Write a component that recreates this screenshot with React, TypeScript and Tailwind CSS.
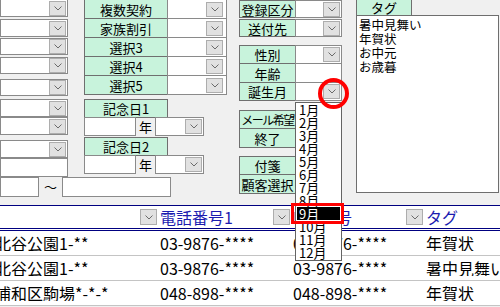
const Chev = () => (
  <svg width="8" height="5" viewBox="0 0 8 5" fill="none">
    <path d="M0.5 0.5 L4 4 L7.5 0.5" stroke="#6a6a6a" strokeWidth="1" />
  </svg>
)

const DropBtn = ({ className = "" }: { className?: string }) => (
  <div className={`w-[17px] h-[15px] shrink-0 bg-[#e1e1e1] border border-[#adadad] flex items-center justify-center ${className}`}>
    <Chev />
  </div>
)

function Box({ className = "", button = false, pad = "pr-px" }: { className?: string; button?: boolean; pad?: string }) {
  return (
    <div className={`bg-white border border-[#8a8a8a] flex items-center justify-end ${pad} ${className}`}>
      {button && <DropBtn />}
    </div>
  )
}

function Label({ children, className = "" }: { children: React.ReactNode; className?: string }) {
  return (
    <div className={`bg-[#c8f3dc] border border-[#6f6f6f] flex items-center justify-center text-[13px] leading-none text-black whitespace-nowrap overflow-hidden shrink-0 ${className}`}>
      {children}
    </div>
  )
}

const months = ["1月", "2月", "3月", "4月", "5月", "6月", "7月", "8月", "9月", "10月", "11月", "12月"]
const tags = ["暑中見舞い", "年賀状", "お中元", "お歳暮"]

const rows = [
  { addr: "北谷公園1-**", tel1: "03-9876-****", tel2: "03-9876-****", tag: "年賀状" },
  { addr: "北谷公園1-**", tel1: "03-9876-****", tel2: "03-9876-****", tag: "暑中見舞い" },
  { addr: "浦和区駒場*-*-*", tel1: "048-898-****", tel2: "048-898-****", tag: "年賀状" },
]

export default function App() {
  return (
    <div className="relative w-[500px] h-[307px] overflow-hidden bg-[#f0f0f0] text-black font-['Noto_Sans_CJK_JP','Noto_Sans',sans-serif]">
      {/* Form area */}
      <div className="flex h-[205px]">
        {/* Left block */}
        <div className="w-[227px] flex flex-col shrink-0">
          <div className="flex h-[177px]">
            <div className="w-[68px] flex flex-col">
              <Box button className="h-[18px] -mt-px" />
              <Box button className="h-[18px] mt-[2px]" />
              <Box button className="h-[17px] mt-px" />
              <Box button className="h-[17px] mt-[2px]" />
              <Box button className="h-[17px] mt-[5px]" />
              <Box button className="h-[18px] mt-[3px]" />
              <Box button className="h-[18px]" />
              <Box button className="h-[18px] mt-[5px]" />
              <Box className="h-[19px]" />
            </div>
            <div className="w-[16px]" />
            <div className="w-[143px] flex flex-col">
              {["複数契約", "家族割引", "選択3", "選択4", "選択5"].map((t) => (
                <div key={t} className="flex h-[20px] -mt-px">
                  <Label className="w-[84px] h-full">{t}</Label>
                  <Box button pad="pr-[3px]" className="w-[60px] h-full -ml-px" />
                </div>
              ))}
              {/* 記念日 */}
              <Label className="w-[84px] h-[19px] mt-[4px]">記念日1</Label>
              <div className="flex h-[19px] -mt-px items-stretch">
                <Box className="w-[52px]" />
                <div className="w-[19px] flex items-center justify-center text-[13px]">年</div>
                <Box button className="w-[49px]" />
              </div>
              <Label className="w-[84px] h-[19px] mt-px">記念日2</Label>
              <div className="flex h-[19px] -mt-px items-stretch">
                <Box className="w-[52px]" />
                <div className="w-[19px] flex items-center justify-center text-[13px]">年</div>
                <Box button className="w-[49px]" />
              </div>
            </div>
          </div>
          <div className="flex h-[20px] items-stretch">
            <Box className="w-[39px]" />
            <div className="w-[23px] flex items-center justify-center text-[13px]">〜</div>
            <Box className="w-[109px]" />
          </div>
        </div>

        <div className="w-[12px] shrink-0" />

        {/* Middle block */}
        <div className="w-[103px] flex flex-col shrink-0">
          <div className="flex h-[18px]">
            <Label className="w-[57px] h-full">登録区分</Label>
            <Box button className="w-[47px] h-full -ml-px" />
          </div>
          <div className="flex h-[18px] mt-px">
            <Label className="w-[57px] h-full">送付先</Label>
            <Box button className="w-[47px] h-full -ml-px" />
          </div>
          <div className="flex flex-col mt-[9px]">
            <div className="flex h-[19px] -mt-px">
              <Label className="w-[57px] h-full">性別</Label>
              <Box button className="w-[47px] h-full -ml-px" />
            </div>
            <div className="flex h-[20px] -mt-px">
              <Label className="w-[57px] h-full">年齢</Label>
              <Box className="w-[47px] h-full -ml-px" />
            </div>
            <div className="flex h-[19px] -mt-px">
              <Label className="w-[57px] h-full">誕生月</Label>
              <Box button className="w-[47px] h-full -ml-px" />
            </div>
          </div>
          <div className="flex flex-col mt-[10px]">
            <div className="flex h-[19px] -mt-px">
              <Label className="w-[57px] h-full">
                <span className="text-[12px] tracking-[-1.5px]">メール希望</span>
              </Label>
              <Box className="w-[47px] h-full -ml-px" />
            </div>
            <div className="flex h-[20px] -mt-px">
              <Label className="w-[57px] h-full">終了</Label>
              <Box className="w-[47px] h-full -ml-px" />
            </div>
          </div>
          <div className="flex flex-col mt-[9px]">
            <div className="flex h-[19px] -mt-px">
              <Label className="w-[57px] h-full">付箋</Label>
              <Box className="w-[47px] h-full -ml-px" />
            </div>
            <div className="flex h-[20px] -mt-px">
              <Label className="w-[57px] h-full">顧客選択</Label>
              <Box className="w-[47px] h-full -ml-px" />
            </div>
          </div>
        </div>

        <div className="w-[14px] shrink-0" />

        {/* Right block: tags */}
        <div className="w-[143px] flex flex-col shrink-0">
          <Label className="w-[56px] h-[17px] -mt-px">タグ</Label>
          <div className="h-[178px] -mt-px bg-white border border-[#6e6e6e] pl-[2px] pt-[2px]">
            {tags.map((t) => (
              <div key={t} className="text-[12.5px] leading-[14px]">{t}</div>
            ))}
          </div>
        </div>
      </div>

      {/* Table */}
      <div className="bg-white">
        <div className="grid grid-cols-[160px_133px_133px_74px] h-[26px] border-t border-b-[3px] border-double border-[#000080] text-[16px] text-[#1c1cb0]">
          <div className="flex items-center">
            <DropBtn className="ml-auto mr-[3px] w-[16px] h-[16px]" />
          </div>
          <div className="flex items-center">
            <span className="leading-none">電話番号1</span>
            <DropBtn className="ml-auto mr-[3px] w-[16px] h-[16px]" />
          </div>
          <div className="flex items-center">
            <span className="leading-none">FAX番号</span>
            <DropBtn className="ml-auto mr-[3px] w-[16px] h-[16px]" />
          </div>
          <div className="flex items-center">
            <span className="leading-none">タグ</span>
          </div>
        </div>
        {rows.map((r, i) => (
          <div key={i} className="grid grid-cols-[160px_133px_133px_74px] h-[25px] border-b border-[#c4c4c4] items-center text-[16px] leading-none">
            <div className="overflow-hidden whitespace-nowrap">
              <span className="block -ml-[5px]">{r.addr}</span>
            </div>
            <div className="whitespace-nowrap">{r.tel1}</div>
            <div className="whitespace-nowrap">{r.tel2}</div>
            <div className="whitespace-nowrap overflow-hidden">{r.tag}</div>
          </div>
        ))}
      </div>

      {/* Open month dropdown */}
      <div className="absolute left-[295px] top-[102px] w-[47px] bg-white border border-[#646464] pb-px">
        {months.map((m) => (
          <div
            key={m}
            className={
              m === "9月"
                ? "h-[13px] bg-black text-white text-[13px] leading-[13px] pl-[2px] mx-px"
                : "h-[13px] text-[13px] leading-[13px] pl-[3px]"
            }
          >
            {m}
          </div>
        ))}
      </div>

      {/* Annotations */}
      <div className="absolute left-[318px] top-[78px] w-[31px] h-[31px] rounded-full border-[4px] border-[#ff0000]" />
      <div className="absolute left-[291px] top-[203px] w-[53px] h-[21px] border-[3px] border-[#ff0000]" />
    </div>
  )
}
